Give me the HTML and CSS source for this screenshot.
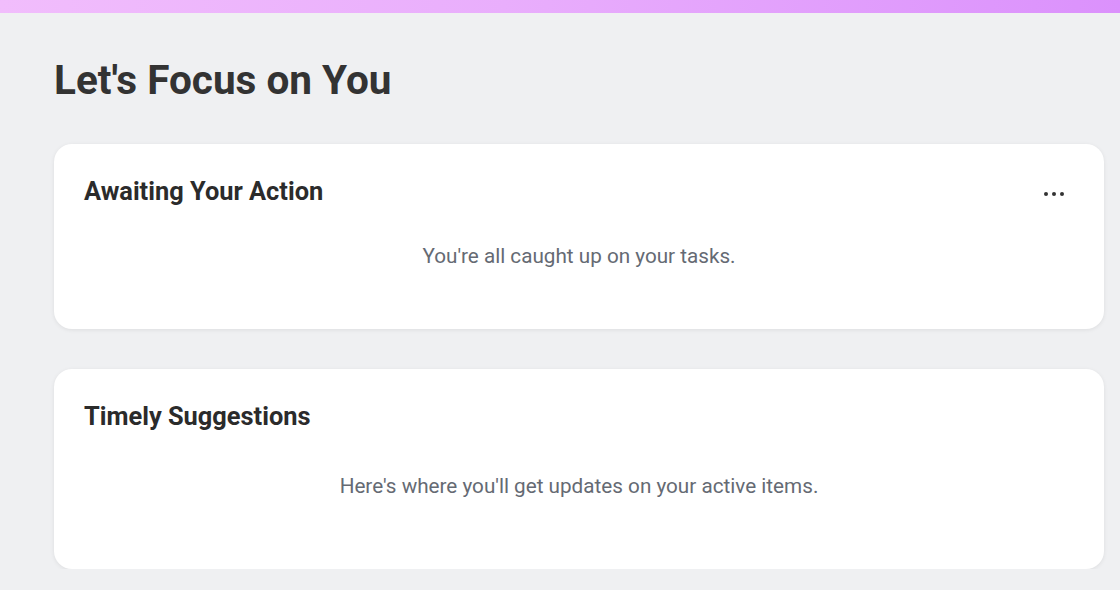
FILE: index.html
```html
<!DOCTYPE html>
<html lang="en">
<head>
<meta charset="utf-8">
<title>Let's Focus on You</title>
<link rel="stylesheet" href="styles.css">
</head>
<body>
<div class="topbar"></div>
<main class="page">
  <h1 class="page-title">Let's Focus on You</h1>
  <section class="card card-action">
    <header class="card-head">
      <h2 class="card-title">Awaiting Your Action</h2>
      <button class="more" aria-label="More options">
        <svg width="20" height="4" viewBox="0 0 20 4"><circle cx="2" cy="2" r="2"/><circle cx="10" cy="2" r="2"/><circle cx="18" cy="2" r="2"/></svg>
      </button>
    </header>
    <p class="card-empty">You're all caught up on your tasks.</p>
  </section>
  <section class="card card-suggest">
    <header class="card-head">
      <h2 class="card-title">Timely Suggestions</h2>
    </header>
    <p class="card-empty">Here's where you'll get updates on your active items.</p>
  </section>
</main>
</body>
</html>
```
FILE: styles.css
```css
* { box-sizing: border-box; }
html, body { margin: 0; padding: 0; }
body {
  background: #eff0f2;
  font-family: Roboto, "Noto Sans", sans-serif;
  color: #333;
  overflow: hidden;
}
.topbar {
  height: 13px;
  background: linear-gradient(90deg, #f1bdfc 0%, #e9aefc 45%, #db91fc 100%);
}
.page {
  padding: 43px 16px 0 54px;
  display: flex;
  flex-direction: column;
}
.page-title {
  margin: 0 0 40px;
  font-size: 40.5px;
  line-height: 48px;
  font-weight: 700;
  color: #333333;
}
.card {
  background: #fff;
  border-radius: 18px;
  box-shadow: 0 1px 4px rgba(0,0,0,0.08);
  padding: 32px 30px 0;
}
.card-action { height: 185px; margin-bottom: 40px; }
.card-suggest { height: 200px; }
.card-head {
  display: flex;
  align-items: center;
  justify-content: space-between;
  height: 30px;
}
.card-title {
  margin: 0;
  font-size: 25.4px;
  font-weight: 700;
  color: #2b2b2b;
}
.more {
  border: 0;
  background: none;
  padding: 0;
  margin: 6px 10px 0 0;
  display: flex;
  fill: #333;
}
.card-empty {
  margin: 38px 0 0;
  text-align: center;
  font-size: 20.7px;
  color: #656a73;
}
.card-suggest .card-empty { margin-top: 43px; }
```
